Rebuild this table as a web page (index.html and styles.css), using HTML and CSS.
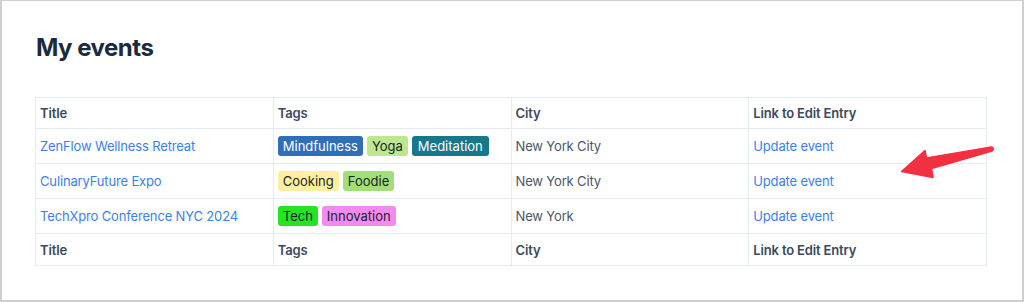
FILE: index.html
```html
<!DOCTYPE html>
<html>
<head>
<meta charset="utf-8">
<link rel="stylesheet" href="styles.css">
</head>
<body>
<div class="frame">
  <h1 class="title">My events</h1>
  <table class="events">
    <thead>
      <tr><th>Title</th><th>Tags</th><th>City</th><th>Link to Edit Entry</th></tr>
    </thead>
    <tbody>
      <tr>
        <td><a href="#">ZenFlow Wellness Retreat</a></td>
        <td><div class="tags"><span class="tag t-mind">Mindfulness</span><span class="tag t-yoga">Yoga</span><span class="tag t-medi">Meditation</span></div></td>
        <td class="city">New York City</td>
        <td><a href="#">Update event</a></td>
      </tr>
      <tr>
        <td><a href="#">CulinaryFuture Expo</a></td>
        <td><div class="tags"><span class="tag t-cook">Cooking</span><span class="tag t-food">Foodie</span></div></td>
        <td class="city">New York City</td>
        <td><a href="#">Update event</a></td>
      </tr>
      <tr>
        <td><a href="#">TechXpro Conference NYC 2024</a></td>
        <td><div class="tags"><span class="tag t-tech">Tech</span><span class="tag t-inno">Innovation</span></div></td>
        <td class="city">New York</td>
        <td><a href="#">Update event</a></td>
      </tr>
    </tbody>
    <tfoot>
      <tr><th>Title</th><th>Tags</th><th>City</th><th>Link to Edit Entry</th></tr>
    </tfoot>
  </table>
  <svg class="arrow" width="110" height="45" viewBox="890 140 110 45" xmlns="http://www.w3.org/2000/svg">
    <path d="M901.5 171.5 L925 150.5 L926.5 158 L991.5 147 Q995 148.5 992 151 L931.5 168.5 L933 177.5 Z" fill="#f3303f" stroke="#f3303f" stroke-width="1.5" stroke-linejoin="round"/>
  </svg>
</div>
</body>
</html>
```

FILE: styles.css
```css
* { box-sizing: border-box; }
html, body { margin: 0; padding: 0; background: #fff; }
body {
  font-family: Inter, "Noto Sans", "Liberation Sans", sans-serif;
  -webkit-font-smoothing: antialiased;
}
.frame {
  position: relative;
  width: 1024px;
  height: 302px;
  border: 1px solid #cfcfcf;
  border-left-width: 2px;
  border-right-width: 2px;
  border-bottom-width: 2px;
  padding: 30px 35px 0 33px;
}
.title {
  margin: 0 0 33px 1px;
  font-size: 24px;
  line-height: 33px;
  font-weight: 700;
  color: #1c2a3d;
  letter-spacing: -0.5px;
}
.events {
  width: 952px;
  border-collapse: collapse;
  table-layout: fixed;
  font-size: 13px;
}
.events th, .events td {
  border: 1px solid #e6ebf1;
  text-align: left;
  padding: 0 5px 0 4px;
  vertical-align: middle;
  letter-spacing: -0.15px;
}
.events th {
  height: 31px;
  font-weight: 600;
  color: #3b4a5e;
}
.events tfoot th { height: 32px; }
.events td { height: 35px; color: #4a5668; }
.events a { color: #3a7ff0; text-decoration: none; }
.tags { display: flex; gap: 4px; }
.tag {
  display: inline-block;
  height: 20px;
  line-height: 20px;
  padding: 0 5px;
  border-radius: 3px;
  font-size: 13px;
  letter-spacing: 0;
  color: #1a1f26;
}
.t-mind { background: #2f6fb9; color: #fff; }
.t-yoga { background: #bce78e; }
.t-medi { background: #177889; color: #fff; padding: 0 6px; }
.t-cook { background: #fdef9f; }
.t-food { background: #a2df78; }
.t-tech { background: #24e424; }
.t-inno { background: #f28bf1; }
.arrow {
  position: absolute;
  left: 888px;
  top: 139px;
}
```
